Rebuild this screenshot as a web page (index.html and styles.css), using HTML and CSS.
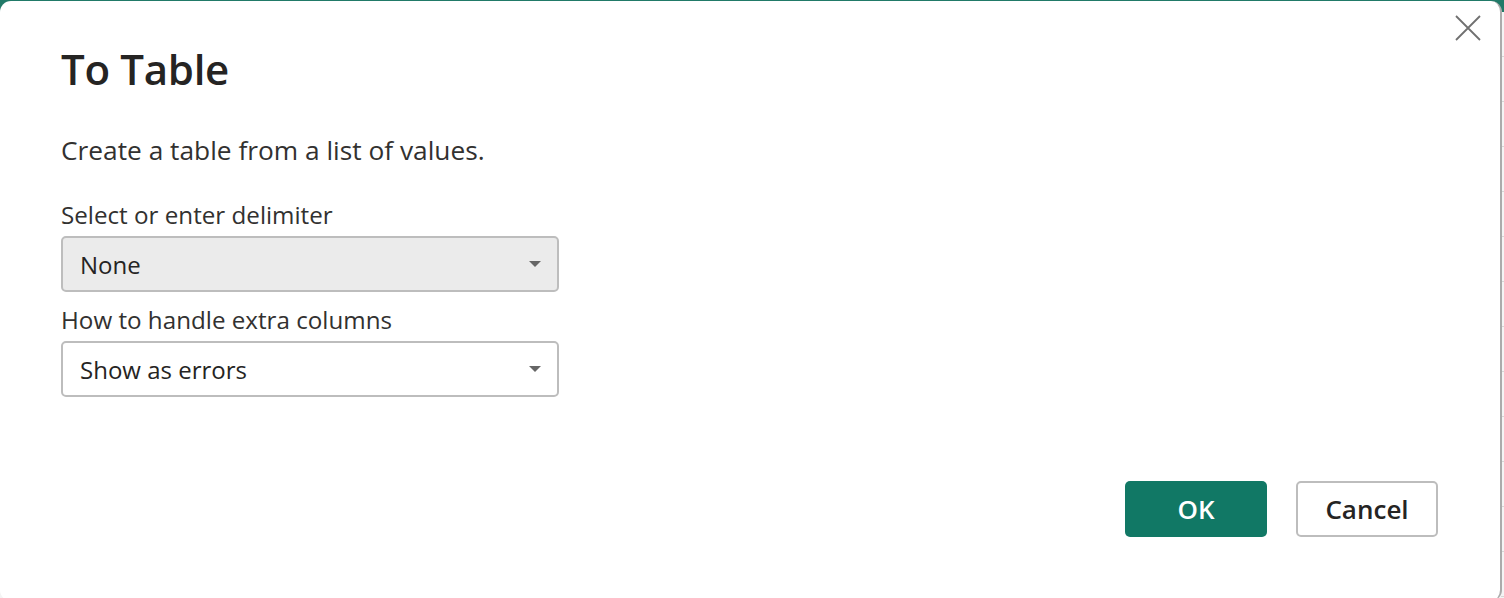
FILE: index.html
```html
<!DOCTYPE html>
<html lang="en">
<head>
    <meta charset="UTF-8">
    <title>To Table</title>
    <link rel="stylesheet" href="styles.css">
</head>
<body>
    <div class="sheet-edge"></div>

    <div class="dialog">
        <button class="close-btn" aria-label="Close">
            <svg width="26" height="26" viewBox="0 0 26 26">
                <path d="M1 1 L25 25 M25 1 L1 25" stroke="#707070" stroke-width="1.8" fill="none"/>
            </svg>
        </button>

        <h1 class="dialog-title">To Table</h1>
        <p class="dialog-desc">Create a table from a list of values.</p>

        <div class="form-group">
            <label class="field-label">Select or enter delimiter</label>
            <div class="dropdown dropdown-filled">
                <span>None</span>
                <span class="caret"></span>
            </div>
        </div>

        <div class="form-group">
            <label class="field-label">How to handle extra columns</label>
            <div class="dropdown">
                <span>Show as errors</span>
                <span class="caret"></span>
            </div>
        </div>

        <div class="dialog-actions">
            <button class="btn btn-primary">OK</button>
            <button class="btn btn-secondary">Cancel</button>
        </div>
    </div>
</body>
</html>
```

FILE: styles.css
```css
* {
    box-sizing: border-box;
    margin: 0;
    padding: 0;
}
body {
    font-family: "Open Sans", "Noto Sans", Arial, sans-serif;
    width: 1504px;
    height: 598px;
    overflow: hidden;
    background: linear-gradient(#217a68 0, #217a68 12px, #f4f4f4 12px);
    position: relative;
}
/* grid lines of the sheet showing at the right edge */
.sheet-edge {
    position: absolute;
    top: 12px;
    right: 0;
    width: 3px;
    bottom: 0;
    background: repeating-linear-gradient(#f4f4f4 0, #f4f4f4 44px, #d6d6d6 44px, #d6d6d6 45px);
}
.dialog {
    position: relative;
    margin-top: 1px;
    width: 1502px;
    height: 600px;
    background: #fff;
    border-radius: 11px;
    border-right: 2px solid #ababab;
    padding: 38px 0 0 61px;
    color: #252423;
}
.close-btn {
    position: absolute;
    top: 14px;
    right: 19px;
    background: none;
    border: none;
    width: 26px;
    height: 26px;
    cursor: pointer;
}
.close-btn svg {
    display: block;
}
.dialog-title {
    font-size: 42px;
    font-weight: 600;
    line-height: 60px;
    letter-spacing: -0.3px;
    margin-bottom: 33px;
}
.dialog-desc {
    font-size: 26.3px;
    line-height: 36px;
    color: #323130;
    margin-bottom: 30px;
}
.form-group {
    width: 498px;
    margin-bottom: 11px;
}
.field-label {
    display: block;
    font-size: 24.2px;
    line-height: 34px;
    color: #323130;
    margin-bottom: 4px;
}
.dropdown {
    height: 56px;
    border: 2px solid #bdbdbd;
    border-radius: 5px;
    background: #fff;
    display: flex;
    align-items: center;
    justify-content: space-between;
    padding: 0 16px 0 17px;
    font-size: 24px;
    color: #252423;
}
.dropdown-filled {
    background: #ebebeb;
}
.caret {
    width: 0;
    height: 0;
    border-left: 6px solid transparent;
    border-right: 6px solid transparent;
    border-top: 6px solid #666;
}
.dialog-actions {
    position: absolute;
    right: 62px;
    top: 480px;
    display: flex;
    gap: 29px;
}
.btn {
    width: 142px;
    height: 56px;
    border-radius: 5px;
    font-family: "Open Sans", "Noto Sans", Arial, sans-serif;
    font-size: 26px;
    font-weight: 600;
    cursor: pointer;
}
.btn-primary {
    background-color: #117865;
    border: none;
    color: #fff;
}
.btn-secondary {
    background-color: #fff;
    border: 2px solid #bdbdbd;
    color: #252423;
}
```
